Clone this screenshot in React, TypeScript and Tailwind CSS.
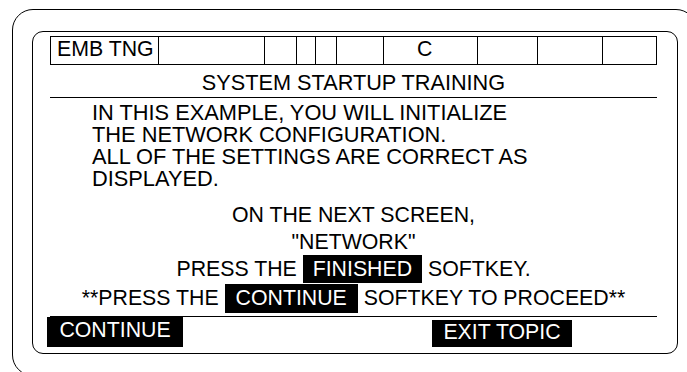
import React from "react";

const cells: { w: string; label?: string; cls?: string }[] = [
  { w: "w-[108px]", label: "EMB TNG", cls: "pl-[6px]" },
  { w: "w-[106px]" },
  { w: "w-[32px]" },
  { w: "w-[19px]" },
  { w: "w-[21px]" },
  { w: "w-[47px]" },
  { w: "w-[94px]", label: "C", cls: "pl-[33px]" },
  { w: "w-[60px]" },
  { w: "w-[65px]" },
  { w: "w-[53px]" },
];

export default function App() {
  return (
    <div className="w-[687px] h-[372px] overflow-hidden bg-white flex flex-col font-['Liberation_Sans',Arial,sans-serif] text-[21.3px] text-black">
      <div className="ml-[12px] mt-[9px] w-[685px] h-[367px] shrink-0 rounded-[21px] border border-black pl-[19px] pt-[21px]">
        <div className="w-[646px] h-[323px] rounded-[11px] border border-black pl-[17px] pr-[20px] pt-[4px] flex flex-col">
          {/* status table */}
          <div className="flex h-[29px] w-[607px] border border-black">
            {cells.map((c, i) => (
              <div
                key={i}
                className={`${c.w} shrink-0 h-full ${i < cells.length - 1 ? "border-r border-black" : ""} ${c.cls ?? ""} pt-[2px] leading-[21px] whitespace-nowrap`}
              >
                {c.label ?? ""}
              </div>
            ))}
          </div>

          {/* title */}
          <div className="h-[33px] border-b border-black pt-[7px] text-center text-[21.7px] leading-[22px] whitespace-nowrap">
            SYSTEM STARTUP TRAINING
          </div>

          {/* paragraph */}
          <div className="mt-[4px] ml-[42px] text-[21.8px] leading-[22px] whitespace-nowrap">
            <div>IN THIS EXAMPLE, YOU WILL INITIALIZE</div>
            <div>THE NETWORK CONFIGURATION.</div>
            <div>ALL OF THE SETTINGS ARE CORRECT AS</div>
            <div>DISPLAYED.</div>
          </div>

          <div className="mt-[14px] text-center leading-[22px] whitespace-nowrap">ON THE NEXT SCREEN,</div>
          <div className="mt-[5px] text-center leading-[22px] whitespace-nowrap">"NETWORK"</div>
          <div className="mt-[5px] text-center leading-[22px] whitespace-nowrap">
            PRESS THE{" "}
            <span className="bg-black text-white px-[10px] pt-[2px] pb-[2px]">FINISHED</span>{" "}
            SOFTKEY.
          </div>
          <div className="mt-[7px] text-center leading-[22px] whitespace-nowrap">
            **PRESS THE{" "}
            <span className="bg-black text-white px-[11px] pt-[2px] pb-[3px]">CONTINUE</span>{" "}
            SOFTKEY TO PROCEED**
          </div>

          <div className="mt-[7px] border-t border-black" />

          {/* softkeys */}
          <div className="flex items-end h-[30px]">
            <div className="-ml-[3px] w-[136px] h-[30px] bg-black text-white text-center pt-[3px] leading-[21px]">
              CONTINUE
            </div>
            <div className="ml-[249px] w-[140px] h-[27px] bg-black text-white text-center pt-[2px] leading-[21px]">
              EXIT TOPIC
            </div>
          </div>
        </div>
      </div>
    </div>
  );
}
